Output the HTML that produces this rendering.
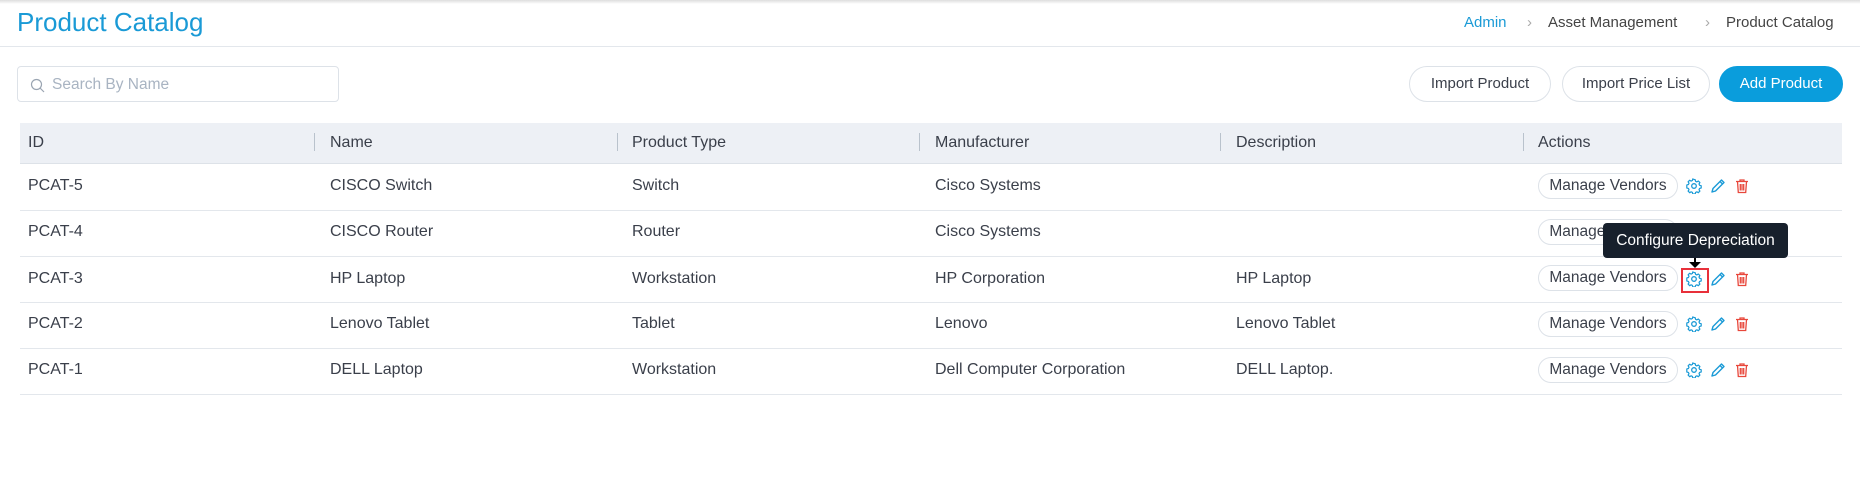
<!DOCTYPE html>
<html><head><meta charset="utf-8"><style>
*{margin:0;padding:0;box-sizing:border-box}
body{width:1860px;height:498px;background:#fff;font-family:"Liberation Sans",sans-serif;color:#3a3f4a;position:relative;overflow:hidden}
.abs{position:absolute}
.top{left:0;top:0;width:1860px;height:4px;background:linear-gradient(#ddd,#fff)}
.title{left:17px;top:7px;font-size:26px;color:#1a9ad6}
.hline{left:0;top:46px;width:1860px;height:1px;background:#e3e7ec}
.bc{top:14px;font-size:15px;color:#444}
.search{left:17px;top:66px;width:322px;height:36px;border:1px solid #dde2e8;border-radius:4px}
.search span{position:absolute;left:34px;top:9px;color:#a9b4c2;font-size:15.5px}
.btn{top:66px;height:36px;border:1px solid #dde2e8;border-radius:18px;font-size:15px;text-align:center;line-height:34px;color:#3a3f4a}
.thead{left:20px;top:123px;width:1822px;height:41px;background:#edf0f5;border-bottom:1px solid #dde2e8}
.th{top:134px;font-size:16px;color:#3a3f4a}
.sep{top:133px;width:1px;height:18px;background:#b9c2cc}
.row{left:20px;width:1822px;height:1px;background:#e3e7ec}
.td{font-size:16px;color:#3a3f4a;margin-top:-1px}
.pill{left:1538px;width:140px;height:26px;border:1px solid #dde2e8;border-radius:13px;font-size:15.5px;text-align:center;line-height:24px}
</style></head><body>
<div class="abs top"></div>
<div class="abs title">Product Catalog</div>
<div class="abs hline"></div>
<div class="abs bc" style="left:1464px;color:#1a9ad6">Admin</div>
<div class="abs bc" style="left:1527px;color:#aaa">›</div>
<div class="abs bc" style="left:1548px">Asset Management</div>
<div class="abs bc" style="left:1705px;color:#aaa">›</div>
<div class="abs bc" style="left:1726px">Product Catalog</div>
<div class="abs search"><svg style="position:absolute;left:12px;top:11px" width="15" height="15" viewBox="0 0 15 15"><circle cx="6.5" cy="6.5" r="5" fill="none" stroke="#9aa5b2" stroke-width="1.2"/><path d="M10 10l4 4" stroke="#9aa5b2" stroke-width="1.2"/></svg><span>Search By Name</span></div>
<div class="abs btn" style="left:1409px;width:142px">Import Product</div>
<div class="abs btn" style="left:1562px;width:148px">Import Price List</div>
<div class="abs btn" style="left:1719px;width:124px;background:#0a9ddc;border-color:#0a9ddc;color:#fff">Add Product</div>
<div class="abs thead"></div>
<div class="abs th" style="left:28px">ID</div>
<div class="abs th" style="left:330px">Name</div>
<div class="abs th" style="left:632px">Product Type</div>
<div class="abs th" style="left:935px">Manufacturer</div>
<div class="abs th" style="left:1236px">Description</div>
<div class="abs th" style="left:1538px">Actions</div>
<div class="abs sep" style="left:314px"></div><div class="abs sep" style="left:617px"></div><div class="abs sep" style="left:919px"></div><div class="abs sep" style="left:1220px"></div><div class="abs sep" style="left:1523px"></div>

<div class="abs row" style="top:210px"></div>
<div class="abs row" style="top:256px"></div>
<div class="abs row" style="top:302px"></div>
<div class="abs row" style="top:348px"></div>
<div class="abs row" style="top:394px"></div>

<div class="abs td" style="left:28px;top:178px">PCAT-5</div><div class="abs td" style="left:330px;top:178px">CISCO Switch</div><div class="abs td" style="left:632px;top:178px">Switch</div><div class="abs td" style="left:935px;top:178px">Cisco Systems</div>
<div class="abs td" style="left:28px;top:224px">PCAT-4</div><div class="abs td" style="left:330px;top:224px">CISCO Router</div><div class="abs td" style="left:632px;top:224px">Router</div><div class="abs td" style="left:935px;top:224px">Cisco Systems</div>
<div class="abs td" style="left:28px;top:271px">PCAT-3</div><div class="abs td" style="left:330px;top:271px">HP Laptop</div><div class="abs td" style="left:632px;top:271px">Workstation</div><div class="abs td" style="left:935px;top:271px">HP Corporation</div><div class="abs td" style="left:1236px;top:271px">HP Laptop</div>
<div class="abs td" style="left:28px;top:316px">PCAT-2</div><div class="abs td" style="left:330px;top:316px">Lenovo Tablet</div><div class="abs td" style="left:632px;top:316px">Tablet</div><div class="abs td" style="left:935px;top:316px">Lenovo</div><div class="abs td" style="left:1236px;top:316px">Lenovo Tablet</div>
<div class="abs td" style="left:28px;top:362px">PCAT-1</div><div class="abs td" style="left:330px;top:362px">DELL Laptop</div><div class="abs td" style="left:632px;top:362px">Workstation</div><div class="abs td" style="left:935px;top:362px">Dell Computer Corporation</div><div class="abs td" style="left:1236px;top:362px">DELL Laptop.</div>

<svg width="0" height="0" style="position:absolute"><defs>
<g id="gear"><circle cx="8" cy="8" r="2.3" fill="none" stroke="#1a9ad6" stroke-width="1.3"/><path d="M8 1.5l1.2.2.4 1.6 1.3.6 1.4-.9 1.6 1.6-.9 1.4.6 1.3 1.6.4v2.3l-1.6.4-.6 1.3.9 1.4-1.6 1.6-1.4-.9-1.3.6-.4 1.6H6.8l-.4-1.6-1.3-.6-1.4.9-1.6-1.6.9-1.4-.6-1.3-1.6-.4V6.9l1.6-.4.6-1.3-.9-1.4 1.6-1.6 1.4.9 1.3-.6.4-1.6z" fill="none" stroke="#1a9ad6" stroke-width="1.2" stroke-linejoin="round"/></g>
<g id="pen"><path d="M2 14l1-3.5L11.5 2l2.5 2.5L5.5 13z M10 3.5l2.5 2.5" fill="none" stroke="#1a9ad6" stroke-width="1.4" stroke-linejoin="round"/></g>
<g id="trash"><path d="M2 3.5h12M6 3.5V2h4v1.5M3.5 3.5l.8 11h7.4l.8-11M6.3 6v6.5M8 6v6.5M9.7 6v6.5" fill="none" stroke="#e8473b" stroke-width="1.3"/></g>
</defs></svg>

<div class="abs pill" style="top:173px">Manage Vendors</div>
<div class="abs pill" style="top:219px">Manage Vendors</div>
<div class="abs pill" style="top:265px">Manage Vendors</div>
<div class="abs pill" style="top:311px">Manage Vendors</div>
<div class="abs pill" style="top:357px">Manage Vendors</div>

<svg class="abs" style="left:1686px;top:178px" width="70" height="16"><use href="#gear"/><use href="#pen" x="24"/><use href="#trash" x="48"/></svg>
<svg class="abs" style="left:1686px;top:224px" width="70" height="16"><use href="#gear"/><use href="#pen" x="24"/><use href="#trash" x="48"/></svg>
<svg class="abs" style="left:1686px;top:271px" width="70" height="16"><use href="#gear"/><use href="#pen" x="24"/><use href="#trash" x="48"/></svg>
<svg class="abs" style="left:1686px;top:316px" width="70" height="16"><use href="#gear"/><use href="#pen" x="24"/><use href="#trash" x="48"/></svg>
<svg class="abs" style="left:1686px;top:362px" width="70" height="16"><use href="#gear"/><use href="#pen" x="24"/><use href="#trash" x="48"/></svg>

<div class="abs" style="left:1681px;top:268px;width:28px;height:25px;border:2px solid #e8303a"></div>
<div class="abs" style="left:1603px;top:223px;width:185px;height:35px;background:#17202c;border-radius:4px;color:#fff;font-size:15.5px;text-align:center;line-height:35px">Configure Depreciation</div>
<div class="abs" style="left:1694px;top:258px;width:2px;height:6px;background:#000"></div>
<div class="abs" style="left:1689px;top:262px;width:0;height:0;border-left:6px solid transparent;border-right:6px solid transparent;border-top:6px solid #000"></div>
</body></html>
